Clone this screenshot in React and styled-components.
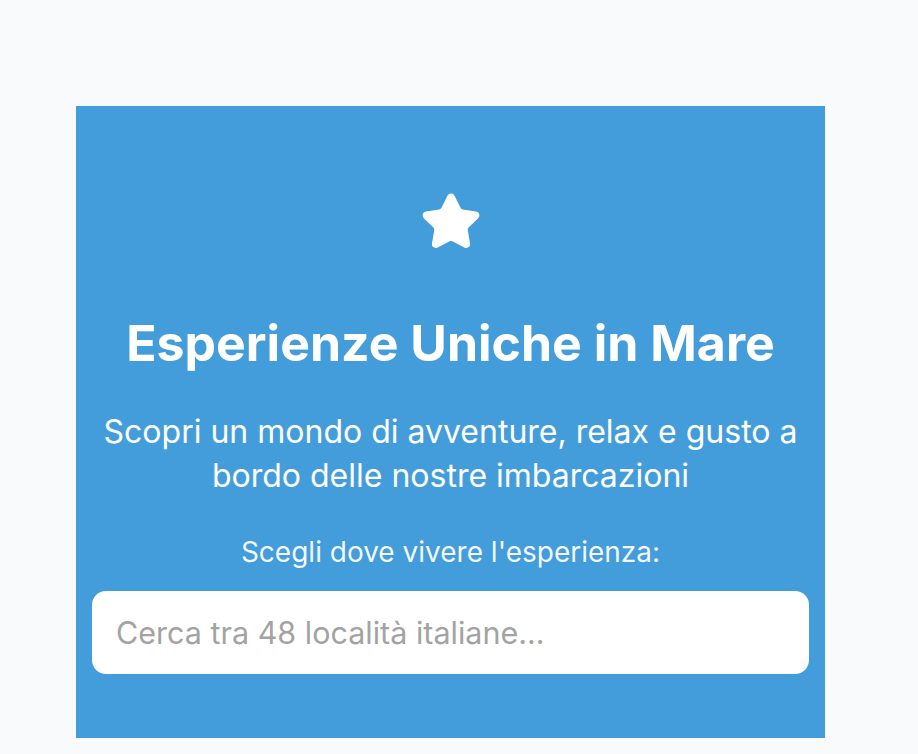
import React from "react";
import styled, { createGlobalStyle } from "styled-components";

const GlobalStyle = createGlobalStyle`
  html, body {
    margin: 0;
    padding: 0;
    background: #f8fafc;
    font-family: "Inter", "Noto Sans", sans-serif;
  }
`;

const Page = styled.div`
  min-height: 754px;
  padding-top: 106px;
  padding-left: 76px;
  box-sizing: border-box;
`;

const Hero = styled.section`
  width: 749px;
  box-sizing: border-box;
  background: #449ddb;
  color: #ffffff;
  text-align: center;
  padding: 85px 16px 64px;
  display: flex;
  flex-direction: column;
  align-items: center;
`;

const StarIcon = styled.svg`
  width: 62px;
  height: 62px;
  display: block;
`;

const Title = styled.h1`
  margin: 60px 0 0;
  font-size: 50px;
  font-weight: 700;
  line-height: 60px;
`;

const Subtitle = styled.p`
  margin: 37px 0 0;
  font-size: 32px;
  line-height: 44px;
  font-weight: 400;
`;

const Label = styled.label`
  margin-top: 35px;
  font-size: 28px;
  line-height: 39px;
  color: rgba(255, 255, 255, 0.95);
`;

const SearchInput = styled.input`
  margin-top: 19px;
  width: 100%;
  height: 83px;
  box-sizing: border-box;
  border: none;
  border-radius: 14px;
  background: #ffffff;
  padding: 0 24px;
  font-family: "Inter", "Noto Sans", sans-serif;
  font-size: 30.5px;
  color: #1f2937;
  outline: none;

  &::placeholder {
    color: #a3a3a3;
  }
`;

export default function App() {
  return (
    <>
      <GlobalStyle />
      <Page>
        <Hero>
          <StarIcon viewBox="0 0 24 24" fill="#fff" stroke="#fff" strokeWidth="2" strokeLinejoin="round">
            <path d="M11.525 2.295a.53.53 0 0 1 .95 0l2.31 4.679a2.123 2.123 0 0 0 1.595 1.16l5.166.756a.53.53 0 0 1 .294.904l-3.736 3.638a2.123 2.123 0 0 0-.611 1.878l.882 5.14a.53.53 0 0 1-.771.56l-4.618-2.428a2.122 2.122 0 0 0-1.973 0L6.396 21.01a.53.53 0 0 1-.77-.56l.881-5.139a2.122 2.122 0 0 0-.611-1.879L2.16 9.795a.53.53 0 0 1 .294-.906l5.165-.755a2.122 2.122 0 0 0 1.597-1.16z" />
          </StarIcon>
          <Title>Esperienze Uniche in Mare</Title>
          <Subtitle>
            Scopri un mondo di avventure, relax e gusto a
            <br />
            bordo delle nostre imbarcazioni
          </Subtitle>
          <Label htmlFor="search">Scegli dove vivere l'esperienza:</Label>
          <SearchInput id="search" type="text" placeholder="Cerca tra 48 località italiane..." />
        </Hero>
      </Page>
    </>
  );
}
